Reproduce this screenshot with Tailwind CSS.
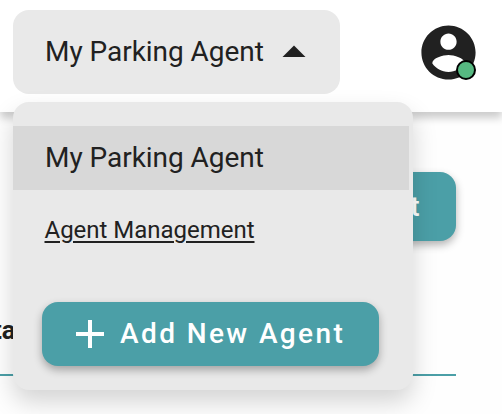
<!DOCTYPE html>
<html lang="en">
<head>
<meta charset="utf-8">
<title>My Parking Agent</title>
<script src="https://cdn.jsdelivr.net/npm/@tailwindcss/browser@4"></script>
</head>
<body class="h-[414px] w-[502px] overflow-hidden bg-[#fefefe] font-['Roboto',sans-serif] text-[#212121]">
<header class="relative z-10 flex h-28 items-start justify-between bg-white pt-2.5 pr-[21.5px] pl-[13px] shadow-[0_6px_8px_rgba(0,0,0,0.2)]">
  <div class="relative">
    <button class="flex h-[84px] w-[327px] items-center rounded-2xl bg-[#e9e9e9] pl-8 text-left text-[28px] leading-8 tracking-[-0.04px]">
      <span class="w-[220px] whitespace-nowrap">My Parking Agent</span>
      <svg class="mb-0.5 ml-[17px] h-3 w-6" viewBox="0 0 24 12" fill="#212121"><path d="M.5 12 12 .4 23.5 12z"/></svg>
    </button>
    <div class="absolute top-[92px] left-0 flex h-72 w-[400px] flex-col rounded-2xl bg-[#e9e9e9] pt-6 shadow-[0_12px_24px_rgba(0,0,0,0.17)]">
      <div class="flex h-16 w-[396px] items-center bg-[#d8d8d8] pl-8 text-[28px] leading-8 tracking-[-0.04px] whitespace-nowrap">My Parking Agent</div>
      <a class="mt-6 ml-[31.5px] h-8 text-2xl leading-8 tracking-[-0.02px] whitespace-nowrap underline decoration-2 underline-offset-[3px]">Agent Management</a>
      <button class="mt-14 ml-[29px] flex h-16 w-[337px] items-center rounded-2xl bg-[#4b9fa7] pl-[34px] text-[28px] leading-8 font-medium tracking-[2.4px] whitespace-nowrap text-white shadow-[0_4px_8px_rgba(0,0,0,0.3)]">
        <svg class="mr-4 size-7 shrink-0" viewBox="0 0 28 28" fill="none" stroke="#fff" stroke-width="4"><path d="M14 0v28M0 14h28"/></svg>
        <span>Add New Agent</span>
      </button>
    </div>
  </div>
  <div class="relative mt-[9.5px] size-[65px]">
    <svg class="size-full" viewBox="0 0 24 24" fill="#212121"><path d="M12 2C6.48 2 2 6.48 2 12s4.48 10 10 10 10-4.48 10-10S17.52 2 12 2zm0 3c1.66 0 3 1.34 3 3s-1.34 3-3 3-3-1.34-3-3 1.34-3 3-3zm0 14.2c-2.5 0-4.71-1.28-6-3.22.03-1.99 4-3.08 6-3.08 1.99 0 5.97 1.09 6 3.08-1.29 1.94-3.5 3.22-6 3.22z"/></svg>
    <span class="absolute top-[40.5px] left-[40.5px] size-5 rounded-full border-2 border-black bg-[#56b881]"></span>
  </div>
</header>
<main class="flex h-[302px] flex-col pt-[60px] pr-[46px]">
  <button class="flex h-[69px] w-[330px] items-center justify-end self-end rounded-2xl bg-[#4b9fa7] pr-[34px] text-[28px] leading-8 font-medium tracking-[2.4px] text-white shadow-[0_4px_8px_rgba(0,0,0,0.3)]">Add New Agent</button>
  <div class="mt-[73px] flex h-[62px] items-start border-b-2 border-[#4b9fa7]">
    <span class="-ml-[23px] text-[26px] leading-8 font-bold">Status</span>
  </div>
</main>
</body>
</html>
